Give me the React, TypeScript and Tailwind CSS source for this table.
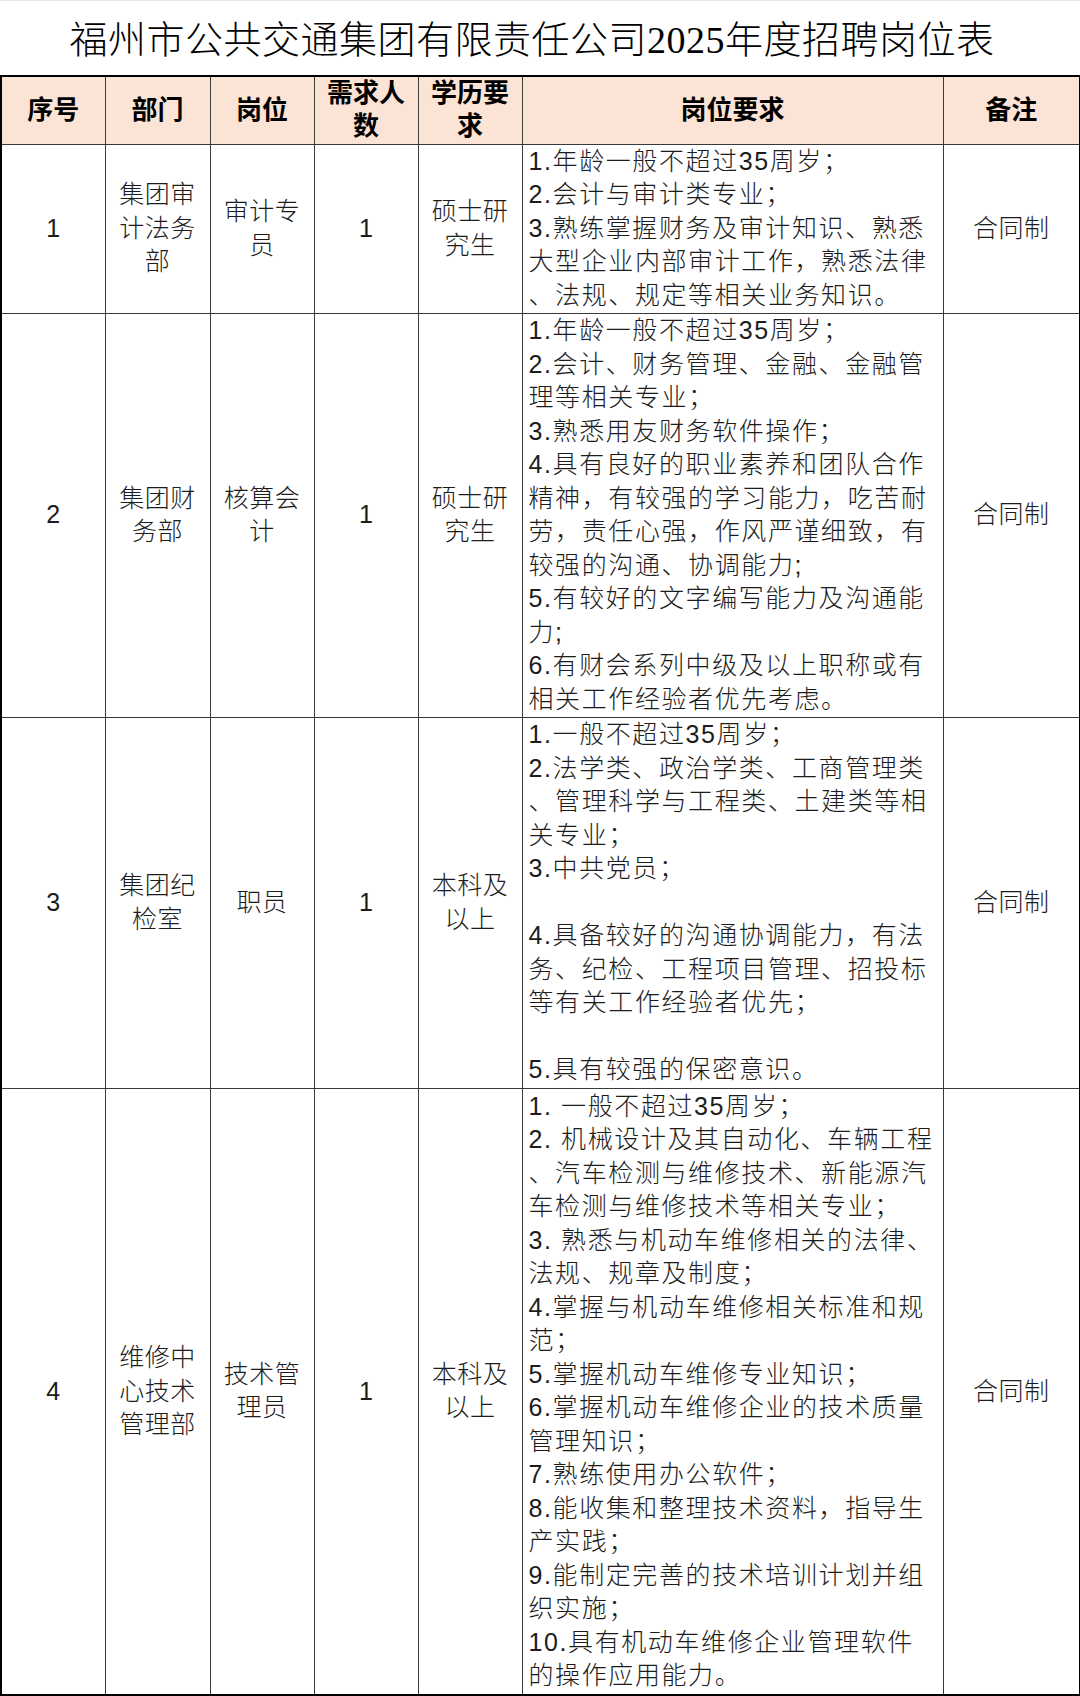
import React from "react";

const FONT = '"Liberation Sans", "Noto Sans CJK SC", sans-serif';
const TITLE_FONT = '"Liberation Serif", "Noto Sans CJK SC", serif';

type Row = {
  no: string;
  dept: string[];
  pos: string[];
  num: string;
  edu: string[];
  req: string[];
  note: string;
  h: string;
};

const rows: Row[] = [
  {
    no: "1",
    dept: ["集团审", "计法务", "部"],
    pos: ["审计专", "员"],
    num: "1",
    edu: ["硕士研", "究生"],
    req: [
      "1.年龄一般不超过35周岁；",
      "2.会计与审计类专业；",
      "3.熟练掌握财务及审计知识、熟悉",
      "大型企业内部审计工作，熟悉法律",
      "、法规、规定等相关业务知识。",
    ],
    note: "合同制",
    h: "h-[169px]",
  },
  {
    no: "2",
    dept: ["集团财", "务部"],
    pos: ["核算会", "计"],
    num: "1",
    edu: ["硕士研", "究生"],
    req: [
      "1.年龄一般不超过35周岁；",
      "2.会计、财务管理、金融、金融管",
      "理等相关专业；",
      "3.熟悉用友财务软件操作；",
      "4.具有良好的职业素养和团队合作",
      "精神，有较强的学习能力，吃苦耐",
      "劳，责任心强，作风严谨细致，有",
      "较强的沟通、协调能力;",
      "5.有较好的文字编写能力及沟通能",
      "力;",
      "6.有财会系列中级及以上职称或有",
      "相关工作经验者优先考虑。",
    ],
    note: "合同制",
    h: "h-[404px]",
  },
  {
    no: "3",
    dept: ["集团纪", "检室"],
    pos: ["职员"],
    num: "1",
    edu: ["本科及", "以上"],
    req: [
      "1.一般不超过35周岁；",
      "2.法学类、政治学类、工商管理类",
      "、管理科学与工程类、土建类等相",
      "关专业；",
      "3.中共党员；",
      "",
      "4.具备较好的沟通协调能力，有法",
      "务、纪检、工程项目管理、招投标",
      "等有关工作经验者优先；",
      "",
      "5.具有较强的保密意识。",
    ],
    note: "合同制",
    h: "h-[371px]",
  },
  {
    no: "4",
    dept: ["维修中", "心技术", "管理部"],
    pos: ["技术管", "理员"],
    num: "1",
    edu: ["本科及", "以上"],
    req: [
      "1. 一般不超过35周岁；",
      "2. 机械设计及其自动化、车辆工程",
      "、汽车检测与维修技术、新能源汽",
      "车检测与维修技术等相关专业；",
      "3. 熟悉与机动车维修相关的法律、",
      "法规、规章及制度；",
      "4.掌握与机动车维修相关标准和规",
      "范；",
      "5.掌握机动车维修专业知识；",
      "6.掌握机动车维修企业的技术质量",
      "管理知识；",
      "7.熟练使用办公软件；",
      "8.能收集和整理技术资料，指导生",
      "产实践；",
      "9.能制定完善的技术培训计划并组",
      "织实施；",
      "10.具有机动车维修企业管理软件",
      "的操作应用能力。",
    ],
    note: "合同制",
    h: "h-[607px]",
  },
];

function Lines({ lines }: { lines: string[] }) {
  return (
    <div className="flex flex-col items-center">
      {lines.map((l, i) => (
        <div key={i} className="whitespace-nowrap">
          {l}
        </div>
      ))}
    </div>
  );
}

const td = "border border-[#3a3a3a] align-middle text-center p-0";
const th = "border border-[#3a3a3a] align-middle text-center p-0 font-bold";

export default function App() {
  return (
    <div
      className="w-[1080px] h-[1696px] bg-white text-[#1c1c1c] border-t border-[#e6e6e6]"
      style={{ fontFamily: FONT }}
    >
      <div
        className="h-[74px] flex items-center justify-center pr-4 pt-1 text-[38px] font-light text-black tracking-[0.5px]"
        style={{ fontFamily: TITLE_FONT }}
      >
        福州市公共交通集团有限责任公司2025年度招聘岗位表
      </div>
      <table className="table-fixed border-collapse w-[1079px] border-2 border-black">
        <colgroup>
          <col className="w-[104px]" />
          <col className="w-[105px]" />
          <col className="w-[104px]" />
          <col className="w-[104px]" />
          <col className="w-[104px]" />
          <col className="w-[421px]" />
          <col className="w-[137px]" />
        </colgroup>
        <thead>
          <tr className="h-[68px] bg-[#fbe3d5] text-[26px] leading-[33px] text-black">
            <th className={th}>序号</th>
            <th className={th}>部门</th>
            <th className={th}>岗位</th>
            <th className={th}>
              <Lines lines={["需求人", "数"]} />
            </th>
            <th className={th}>
              <Lines lines={["学历要", "求"]} />
            </th>
            <th className={th}>岗位要求</th>
            <th className={th}>备注</th>
          </tr>
        </thead>
        <tbody className="text-[25px] leading-[33.5px] font-light">
          {rows.map((r) => (
            <tr key={r.no} className={r.h}>
              <td className={td + " font-normal"}>{r.no}</td>
              <td className={td + " tracking-[0.5px]"}>
                <Lines lines={r.dept} />
              </td>
              <td className={td + " tracking-[0.5px]"}>
                <Lines lines={r.pos} />
              </td>
              <td className={td + " font-normal"}>{r.num}</td>
              <td className={td + " tracking-[0.5px]"}>
                <Lines lines={r.edu} />
              </td>
              <td className={td + " text-left"}>
                <div className="pl-[6px] flex flex-col tracking-[1.6px]">
                  {r.req.map((l, i) => (
                    <div key={i} className="whitespace-nowrap h-[33.5px]">
                      {l}
                    </div>
                  ))}
                </div>
              </td>
              <td className={td + " tracking-[0.5px]"}>{r.note}</td>
            </tr>
          ))}
        </tbody>
      </table>
    </div>
  );
}
